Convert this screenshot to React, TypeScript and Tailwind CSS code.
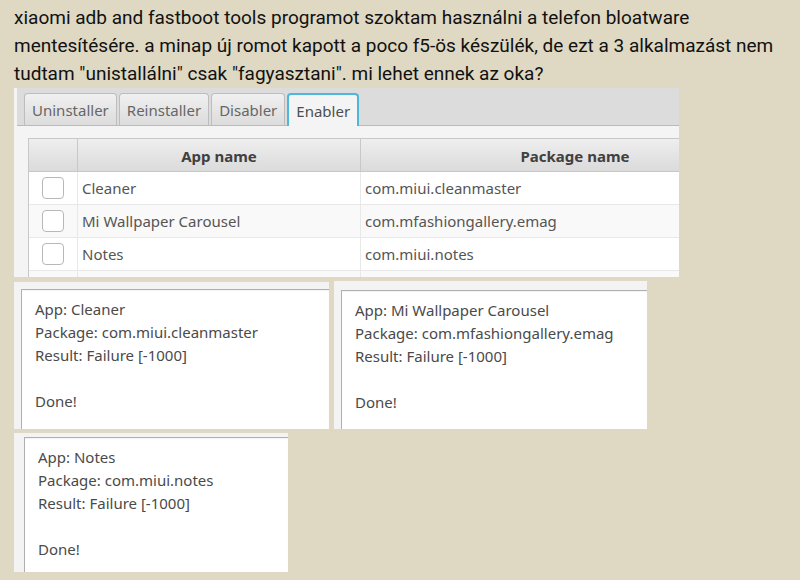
import React, { useState } from 'react';
import clsx from 'clsx';

const tabs = ['Uninstaller', 'Reinstaller', 'Disabler', 'Enabler'];

const apps = [
  { name: 'Cleaner', pkg: 'com.miui.cleanmaster' },
  { name: 'Mi Wallpaper Carousel', pkg: 'com.mfashiongallery.emag' },
  { name: 'Notes', pkg: 'com.miui.notes' },
];

type LogBoxProps = {
  app: string;
  pkg: string;
  className: string;
};

function LogBox({ app, pkg, className }: LogBoxProps) {
  const text = `App: ${app}\nPackage: ${pkg}\nResult: Failure [-1000]\n\nDone!`;

  return (
    <div className={clsx('flex w-full bg-[#f3f3f3]', className)}>
      <textarea
        readOnly
        rows={5}
        aria-label={`${app} log`}
        value={text}
        className="block w-full resize-none overflow-hidden border-t border-l border-[#b0b0b0] bg-white pt-2 pl-[13px] text-[15px] leading-[23px] text-[#4a4a4a] inset-shadow-xs outline-none"
      />
    </div>
  );
}

function AppManager() {
  const [active, setActive] = useState('Enabler');

  return (
    <div className="w-full max-w-[665px] overflow-hidden bg-[#f4f4f4] pl-[3px]">
      <div role="tablist" className="flex gap-0.5 border-b border-[#bababa] bg-[#dcdcdc] pt-[5px] pl-[7px]">
        {tabs.map((tab) => (
          <button
            key={tab}
            type="button"
            role="tab"
            aria-selected={tab === active}
            onClick={() => setActive(tab)}
            className={clsx(
              'h-8 rounded-t-[4px] px-[7px] text-[15px] leading-[30px]',
              tab === active
                ? '-mb-px h-[33px] border-2 border-b-0 border-[#4db8dc] bg-[#f4f4f4] px-[6px] text-[#4f4f4f]'
                : 'border border-b-0 border-[#bdbdbd] bg-linear-to-b from-[#f0f0f0] to-[#dcdcdc] text-[#666666]',
            )}
          >
            {tab}
          </button>
        ))}
      </div>

      <div className="overflow-hidden pt-3 pl-[11px]">
        <table className="w-[761px] table-fixed border-separate border-spacing-0 border-l border-[#c8c8c8] text-[15px] text-[#555555]">
          <colgroup>
            <col className="w-[49px]" />
            <col className="w-[283px]" />
            <col />
          </colgroup>
          <thead>
            <tr className="h-[34px] bg-linear-to-b from-[#efefef] to-[#dadada] text-[#404040]">
              <th aria-label="Selected" className="border-t border-r border-b border-[#c8c8c8]" />
              <th className="border-t border-r border-b border-[#c8c8c8] px-0 pt-0.5 pb-0 font-bold">App name</th>
              <th className="border-t border-b border-[#c8c8c8] px-0 pt-0.5 pb-0 font-bold">Package name</th>
            </tr>
          </thead>
          <tbody className="bg-white">
            {apps.map((app) => (
              <tr key={app.pkg} className="h-[33px] even:bg-[#f9f9f9]">
                <td className="border-r border-b border-[#e8e8e8] p-0">
                  <input
                    type="checkbox"
                    aria-label={app.name}
                    className="mx-auto block size-[22px] appearance-none rounded-[4px] border border-[#b8b8b8] bg-white checked:bg-[#4db8dc]"
                  />
                </td>
                <td className="border-r border-b border-[#e8e8e8] py-0 pl-1">{app.name}</td>
                <td className="border-b border-[#e8e8e8] py-0 pl-1">{app.pkg}</td>
              </tr>
            ))}
            <tr aria-hidden="true" className="h-[6px] bg-[#f9f9f9]">
              <td className="border-r border-[#e8e8e8] p-0" />
              <td className="border-r border-[#e8e8e8] p-0" />
              <td className="p-0" />
            </tr>
          </tbody>
        </table>
      </div>
    </div>
  );
}

export default function App() {
  return (
    <main className="min-h-screen bg-[#dfd8c2] px-[14px] pt-1 pb-2 font-['Noto_Sans','Open_Sans',sans-serif]">
      <p className="font-[Roboto,sans-serif] text-[19px] leading-[28px] text-[#111111]">
        xiaomi adb and fastboot tools programot szoktam használni a telefon bloatware mentesítésére. a minap új
        romot kapott a poco f5-ös készülék, de ezt a 3 alkalmazást nem tudtam "unistallálni" csak "fagyasztani". mi
        lehet ennek az oka?
      </p>

      <AppManager />

      <div className="mt-1 flex flex-wrap items-end gap-x-[5px] gap-y-1">
        <LogBox app="Cleaner" pkg="com.miui.cleanmaster" className="h-[147px] max-w-[315px] pt-[7px] pl-[7px]" />
        <LogBox
          app="Mi Wallpaper Carousel"
          pkg="com.mfashiongallery.emag"
          className="h-[148px] max-w-[313px] pt-[9px] pl-[7px]"
        />
        <LogBox app="Notes" pkg="com.miui.notes" className="h-[139px] max-w-[274px] pt-1 pl-[10px]" />
      </div>
    </main>
  );
}
